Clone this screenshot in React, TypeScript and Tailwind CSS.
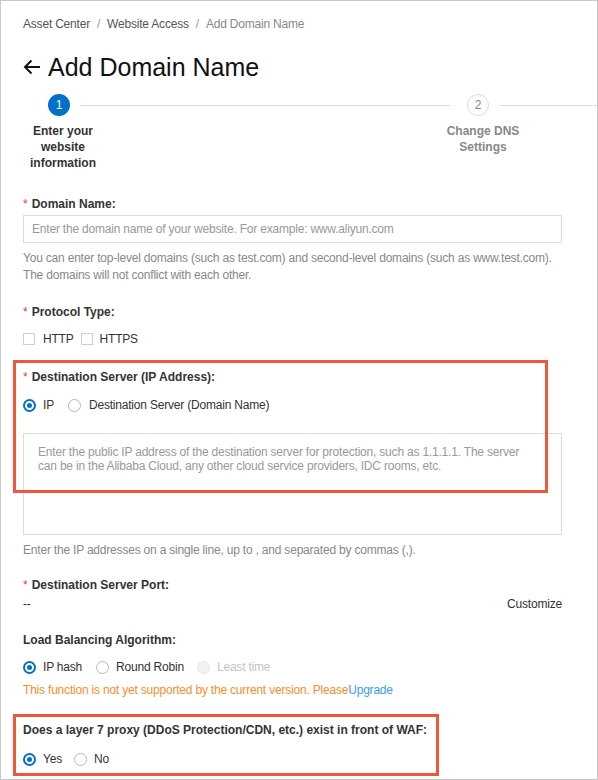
import React from 'react';

function Radio({ checked, disabled }: { checked?: boolean; disabled?: boolean }) {
  if (checked) {
    return (
      <span className="flex w-[13px] h-[13px] rounded-full bg-[#0070cc] items-center justify-center shrink-0">
        <span className="block w-[9px] h-[9px] rounded-full border-2 border-white bg-[#0070cc]" />
      </span>
    );
  }
  return (
    <span
      className={
        disabled
          ? 'block w-[13px] h-[13px] rounded-full border border-[#e6e6e6] bg-[#f2f2f2] shrink-0'
          : 'block w-[13px] h-[13px] rounded-full border border-[#b8b8b8] bg-white shrink-0'
      }
    />
  );
}

function Checkbox() {
  return <span className="block w-[12px] h-[12px] border border-[#cfcfcf] bg-white shrink-0" />;
}

function Label({ children, required }: { children: React.ReactNode; required?: boolean }) {
  return (
    <div className="text-[12px] leading-[16px] font-bold text-[#333] tracking-normal">
      {required && <span className="text-[#e4393c] font-normal mr-[4px]">*</span>}
      {children}
    </div>
  );
}

export default function App() {
  return (
    <div
      className="relative w-[598px] h-[780px] bg-white border border-[#c8c8c8] overflow-hidden text-[#333] tracking-[-0.2px]"
      style={{ fontFamily: '"Liberation Sans", Arial, sans-serif' }}
    >
      {/* breadcrumb */}
      <div className="pl-[22px] pt-[15px] flex items-center text-[12px] leading-[16px]">
        <span className="text-[#555]">Asset Center</span>
        <span className="mx-[7px] text-[#999]">/</span>
        <span className="text-[#555]">Website Access</span>
        <span className="mx-[7px] text-[#999]">/</span>
        <span className="text-[#888]">Add Domain Name</span>
      </div>

      {/* title */}
      <div className="pl-[22px] mt-[19px] flex items-center h-[32px]">
        <svg width="18" height="16" viewBox="0 0 18 16" fill="none" stroke="#111" strokeWidth="2" className="mr-[7px]">
          <path d="M17 8H2M8.5 1.5L2 8l6.5 6.5" />
        </svg>
        <h1 className="text-[25px] leading-[32px] text-[#111] tracking-normal">Add Domain Name</h1>
      </div>

      {/* stepper */}
      <div className="mt-[11px] flex items-center h-[22px]">
        <div className="ml-[47px] w-[22px] h-[22px] rounded-full bg-[#0070cc] text-white text-[12px] flex items-center justify-center shrink-0">
          1
        </div>
        <div className="ml-[10px] mr-[17px] flex-1 h-px bg-[#dcdcdc]" />
        <div className="w-[22px] h-[22px] rounded-full border border-[#dcdcdc] text-[#888] text-[12px] flex items-center justify-center shrink-0">
          2
        </div>
        <div className="ml-[11px] w-[97px] h-px bg-[#dcdcdc]" />
      </div>
      <div className="mt-[7px] flex">
        <div className="ml-[21px] w-[82px] text-center text-[12px] leading-[16px] font-bold text-[#333] tracking-normal">
          Enter your website information
        </div>
        <div className="ml-[329px] w-[100px] text-center text-[12px] leading-[16px] font-bold text-[#888] tracking-normal">
          Change DNS Settings
        </div>
      </div>

      {/* form */}
      <div className="pl-[22px] w-[561px]">
        <div className="mt-[25px]">
          <Label required>Domain Name:</Label>
        </div>
        <div className="mt-[3px] h-[28px] border border-[#dcdcdc] flex items-center px-[8px] text-[12px] text-[#999]">
          Enter the domain name of your website. For example: www.aliyun.com
        </div>
        <div className="mt-[7px] text-[12px] leading-[17px] text-[#888]">
          You can enter top-level domains (such as test.com) and second-level domains (such as www.test.com). The domains will not conflict with each other.
        </div>

        <div className="mt-[20px]">
          <Label required>Protocol Type:</Label>
        </div>
        <div className="mt-[11px] flex items-center h-[16px] text-[12px]">
          <Checkbox />
          <span className="ml-[8px] text-[#333]">HTTP</span>
          <span className="ml-[7px]"><Checkbox /></span>
          <span className="ml-[7px] text-[#333]">HTTPS</span>
        </div>

        <div className="mt-[22px]">
          <Label required>Destination Server (IP Address):</Label>
        </div>
        <div className="mt-[12px] flex items-center h-[16px] text-[12px]">
          <Radio checked />
          <span className="ml-[7px]">IP</span>
          <span className="ml-[14px]"><Radio /></span>
          <span className="ml-[8px]">Destination Server (Domain Name)</span>
        </div>
        <div className="mt-[20px] h-[102px] border border-[#dcdcdc] pl-[14px] pr-[30px] pt-[11px] text-[12px] leading-[14px] text-[#999]">
          Enter the public IP address of the destination server for protection, such as 1.1.1.1. The server can be in the Alibaba Cloud, any other cloud service providers, IDC rooms, etc.
        </div>
        <div className="mt-[7px] text-[12px] leading-[16px] text-[#888]">
          Enter the IP addresses on a single line, up to , and separated by commas (,).
        </div>

        <div className="mt-[19px]">
          <Label required>Destination Server Port:</Label>
        </div>
        <div className="mt-[3px] flex justify-between text-[12px] leading-[16px] text-[#333]">
          <span>--</span>
          <span>Customize</span>
        </div>

        <div className="mt-[20px]">
          <Label>Load Balancing Algorithm:</Label>
        </div>
        <div className="mt-[11px] flex items-center h-[16px] text-[12px]">
          <Radio checked />
          <span className="ml-[7px]">IP hash</span>
          <span className="ml-[14px]"><Radio /></span>
          <span className="ml-[7px]">Round Robin</span>
          <span className="ml-[13px]"><Radio disabled /></span>
          <span className="ml-[7px] text-[#c4c4c4]">Least time</span>
        </div>
        <div className="mt-[7px] text-[12px] leading-[16px] text-[#f98e2b]">
          This function is not yet supported by the current version. Please<span className="text-[#3a9cf2]">Upgrade</span>
        </div>

        <div className="mt-[24px]">
          <Label>Does a layer 7 proxy (DDoS Protection/CDN, etc.) exist in front of WAF:</Label>
        </div>
        <div className="mt-[13px] flex items-center h-[16px] text-[12px]">
          <Radio checked />
          <span className="ml-[7px]">Yes</span>
          <span className="ml-[12px]"><Radio /></span>
          <span className="ml-[7px]">No</span>
        </div>
      </div>

      {/* annotation boxes */}
      <div className="absolute left-[12px] top-[359px] w-[535px] h-[133px] border-[3px] border-[#f0573a] pointer-events-none" />
      <div className="absolute left-[12px] top-[713px] w-[426px] h-[62px] border-[3px] border-[#f0573a] pointer-events-none" />
    </div>
  );
}
